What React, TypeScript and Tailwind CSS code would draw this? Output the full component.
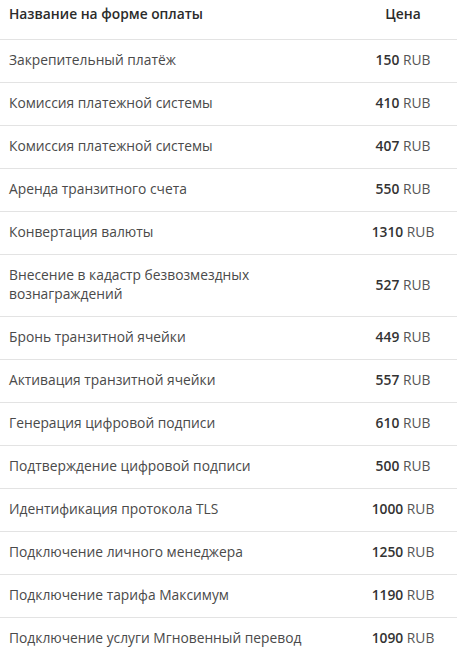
import React from 'react';

const items: { name: string; price: number }[] = [
  { name: 'Закрепительный платёж', price: 150 },
  { name: 'Комиссия платежной системы', price: 410 },
  { name: 'Комиссия платежной системы', price: 407 },
  { name: 'Аренда транзитного счета', price: 550 },
  { name: 'Конвертация валюты', price: 1310 },
  { name: 'Внесение в кадастр безвозмездных вознаграждений', price: 527 },
  { name: 'Бронь транзитной ячейки', price: 449 },
  { name: 'Активация транзитной ячейки', price: 557 },
  { name: 'Генерация цифровой подписи', price: 610 },
  { name: 'Подтверждение цифровой подписи', price: 500 },
  { name: 'Идентификация протокола TLS', price: 1000 },
  { name: 'Подключение личного менеджера', price: 1250 },
  { name: 'Подключение тарифа Максимум', price: 1190 },
  { name: 'Подключение услуги Мгновенный перевод', price: 1090 },
];

export default function App() {
  return (
    <div className="w-[457px] h-[652px] overflow-hidden bg-white font-['Open_Sans',sans-serif] text-[13.8px] leading-[19px]">
      {/* Header */}
      <div className="flex pl-[9px] pr-[8px] pt-[4px] pb-[16px] border-b border-[#e3e3e3] font-semibold text-[#2b2b2b]">
        <div className="flex-1">Название на форме оплаты</div>
        <div className="w-[92px] text-center">Цена</div>
      </div>
      {items.map((item, i) => (
        <div
          key={i}
          className="flex items-center pl-[9px] pr-[8px] pt-[10px] pb-[13px] border-b border-[#e3e3e3]"
        >
          <div className="flex-1 pr-[30px] text-[#4a4a4a]">{item.name}</div>
          <div className="w-[92px] text-center whitespace-nowrap">
            <span className="font-semibold text-[#333]">{item.price}</span>{' '}
            <span className="text-[#555]">RUB</span>
          </div>
        </div>
      ))}
    </div>
  );
}
